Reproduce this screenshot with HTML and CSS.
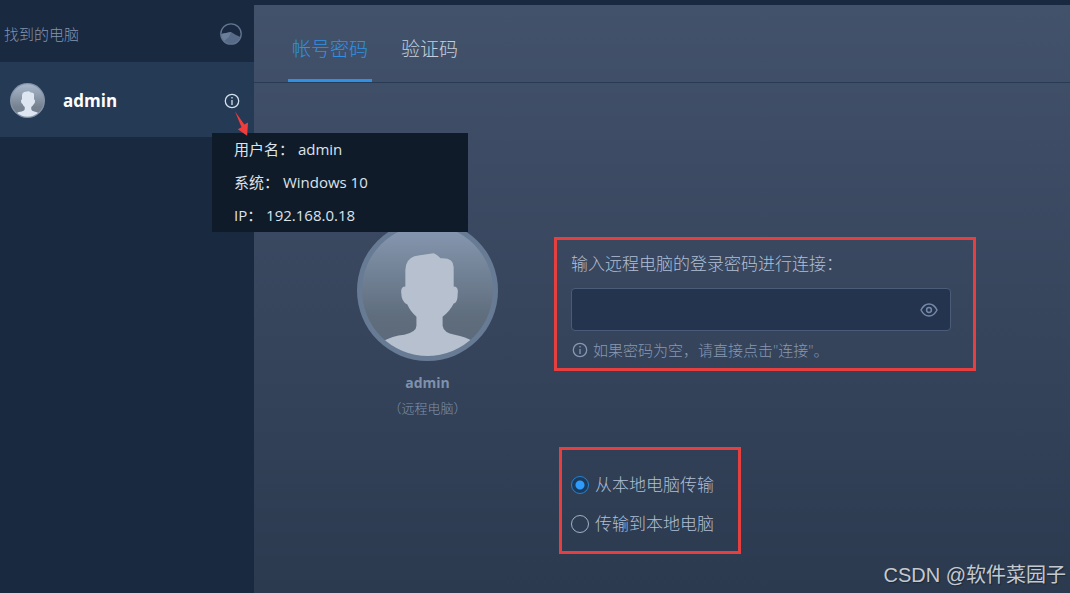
FILE: index.html
```html
<!DOCTYPE html>
<html lang="zh-CN">
<head>
    <meta charset="UTF-8">
    <meta name="viewport" content="width=device-width, initial-scale=1.0">
    <title>连接远程电脑</title>
    <link rel="stylesheet" href="styles.css">
</head>
<body>
<svg class="defs" width="0" height="0" aria-hidden="true">
    <defs>
        <linearGradient id="avatarFill" x1="0" y1="0" x2="0" y2="1">
            <stop offset="0" stop-color="#8799b2"/>
            <stop offset="0.7" stop-color="#5f6d7d"/>
            <stop offset="1" stop-color="#5a6879"/>
        </linearGradient>
        <clipPath id="avatarClip"><circle cx="70" cy="70" r="65"/></clipPath>
        <symbol id="avatar" viewBox="0 0 140 140">
            <circle cx="70" cy="70" r="70" fill="#687b95"/>
            <circle cx="70" cy="70" r="65" fill="url(#avatarFill)"/>
            <path clip-path="url(#avatarClip)" fill="#b6c0ce" d="M48 66 L48 50 Q48 39 57 36 Q67 34 76 33 Q79 34 83 38 Q96 37 96 47 L96 66 Q101 66 100 73 Q100 82 96 83 Q92 91 85 96 L85 105 Q86 112 97 114 Q108 116 116 121 L116 140 L25 140 L25 121 Q35 115 47 114 Q59 111 59 105 L59 96 Q53 91 50 84 Q44 81 44 73 Q43 66 48 66 Z"/>
        </symbol>
        <symbol id="info" viewBox="0 0 16 16">
            <circle cx="8" cy="8" r="6.7" fill="none" stroke="currentColor" stroke-width="1.3"/>
            <path d="M8 7v5M8 4v1.6" fill="none" stroke="currentColor" stroke-width="1.3"/>
        </symbol>
    </defs>
</svg>

<div class="app">
    <aside class="sidebar">
        <div class="sidebar-head">
            <span>找到的电脑</span>
            <svg class="scan-icon" viewBox="0 0 24 24">
                <path d="M2 12 L12 10 L17 13 L21.5 15 A10 10 0 0 1 2 12 Z" fill="#576b88"/>
                <path d="M2 12 L12 10 L10 15 L5 19 A10 10 0 0 1 2 12 Z" fill="#6b7f9b"/>
                <circle cx="12" cy="12" r="10.2" fill="none" stroke="#637691" stroke-width="1.3"/>
            </svg>
        </div>
        <div class="computer">
            <svg class="computer-avatar"><use href="#avatar"/></svg>
            <span class="computer-name">admin</span>
            <button type="button" class="info-button" aria-label="详细信息">
                <svg class="icon"><use href="#info"/></svg>
            </button>
            <svg class="arrow" viewBox="0 0 16 26">
                <path d="M1 0 L11 14 L15 12 L14 26 L4 19 L8 17 Z" fill="#f03c3c"/>
            </svg>
            <div class="tooltip">
                <div>用户名： admin</div>
                <div>系统： Windows 10</div>
                <div>IP： 192.168.0.18</div>
            </div>
        </div>
    </aside>

    <main class="main">
        <nav class="tabs">
            <button type="button" class="tab active">帐号密码</button>
            <button type="button" class="tab">验证码</button>
        </nav>
        <div class="content">
            <div class="remote">
                <svg class="remote-avatar"><use href="#avatar"/></svg>
                <div class="remote-name">admin</div>
                <div class="remote-note">（远程电脑）</div>
            </div>
            <form class="connect-form">
                <div class="marked password-box">
                    <label for="password">输入远程电脑的登录密码进行连接：</label>
                    <div class="password-field">
                        <input type="password" id="password">
                        <button type="button" class="eye-button" aria-label="显示密码">
                            <svg viewBox="0 0 18 14">
                                <path d="M1 7 Q4 1 9 1 Q14 1 17 7 Q14 13 9 13 Q4 13 1 7 Z"/>
                                <circle cx="9" cy="7" r="2.4"/>
                            </svg>
                        </button>
                    </div>
                    <div class="hint">
                        <svg class="icon"><use href="#info"/></svg>
                        <span>如果密码为空，请直接点击"连接"。</span>
                    </div>
                </div>
                <div class="marked direction-box">
                    <label><input type="radio" name="direction" checked>从本地电脑传输</label>
                    <label><input type="radio" name="direction">传输到本地电脑</label>
                </div>
            </form>
        </div>
    </main>
</div>
<div class="watermark">CSDN @软件菜园子</div>
</body>
</html>
```
FILE: styles.css
```css
* {
    box-sizing: border-box;
}
body {
    margin: 0;
    background: #19293f;
    font-family: "Open Sans", "Noto Sans CJK SC", sans-serif;
    font-size: 15px;
    color: #b0bfd6;
}
button {
    padding: 0;
    border: none;
    background: none;
    font-family: inherit;
    cursor: pointer;
}
svg {
    display: block;
}
.defs {
    position: absolute;
}
.icon {
    width: 16px;
    height: 16px;
}
.app {
    display: flex;
    min-height: 100vh;
    padding-top: 5px;
}

/* sidebar */
.sidebar {
    width: 254px;
    flex-shrink: 0;
    background: #19293f;
}
.sidebar-head {
    display: flex;
    align-items: center;
    justify-content: space-between;
    height: 57px;
    padding: 0 11px 0 4px;
    color: #8294b0;
    font-weight: 300;
}
.scan-icon {
    width: 24px;
    height: 24px;
}
.computer {
    position: relative;
    display: flex;
    align-items: center;
    height: 75px;
    padding: 2px 14px 0 10px;
    background: #253a54;
}
.computer-avatar {
    width: 35px;
    height: 35px;
    filter: brightness(1.2) saturate(0.7);
}
.computer-name {
    flex: 1;
    margin-left: 18px;
    color: #fff;
    font-size: 17px;
    font-weight: 700;
}
.info-button {
    color: #d3e0f0;
}
.arrow {
    position: absolute;
    z-index: 3;
    left: 234px;
    top: 49px;
    width: 15px;
    height: 25px;
}
.tooltip {
    position: absolute;
    z-index: 2;
    left: 212px;
    top: 71px;
    width: 256px;
    padding: 0 22px;
    background: #101b2a;
    color: #dce3ec;
    line-height: 33px;
    white-space: nowrap;
}

/* main area */
.main {
    flex: 1;
    background: linear-gradient(#43526b, #2b3a4f);
}
.tabs {
    display: flex;
    gap: 25px;
    height: 78px;
    padding-left: 34px;
    border-bottom: 1px solid #273b55;
}
.tab {
    padding: 11px 4px 0;
    border-bottom: 3px solid transparent;
    color: #c3cfdf;
    font-size: 19px;
    font-weight: 300;
}
.tab.active {
    border-bottom-color: #3090e4;
    color: #3090e4;
}
.content {
    display: flex;
    gap: 56px;
    padding: 137px 94px 0 103px;
}
.remote {
    width: 141px;
    flex-shrink: 0;
    text-align: center;
    color: #7f91ac;
}
.remote-avatar {
    width: 141px;
    height: 141px;
}
.remote-name {
    margin-top: 12px;
    font-size: 14px;
    font-weight: 700;
    line-height: 20px;
}
.remote-note {
    margin-top: 6px;
    font-size: 13px;
    font-weight: 300;
    line-height: 18px;
}
.connect-form {
    flex: 1;
    margin-top: 17px;
}
.marked {
    border: 3px solid #e5403f;
}
.password-box {
    padding: 12px 22px 6px 14px;
}
.password-box label {
    display: block;
    font-size: 17px;
    font-weight: 300;
    line-height: 24px;
}
.password-field {
    display: flex;
    align-items: center;
    height: 43px;
    margin-top: 12px;
    padding-right: 12px;
    border: 1px solid #4a5c78;
    border-radius: 4px;
    background: #25344e;
}
.password-field input {
    flex: 1;
    min-width: 0;
    height: 100%;
    padding: 0 12px;
    border: none;
    outline: none;
    background: none;
    color: #c3cfdf;
    font-size: 17px;
}
.eye-button svg {
    width: 18px;
    height: 14px;
    fill: none;
    stroke: #7488a8;
    stroke-width: 1.5;
}
.hint {
    display: flex;
    align-items: center;
    gap: 5px;
    margin-top: 7px;
    padding-left: 1px;
    color: #8798b4;
    font-weight: 300;
    line-height: 24px;
}
.direction-box {
    display: flex;
    flex-direction: column;
    gap: 15px;
    width: fit-content;
    margin: 76px 0 0 5px;
    padding: 23px 24px 15px 9px;
}
.direction-box label {
    display: flex;
    align-items: center;
    gap: 6px;
    font-size: 17px;
    font-weight: 300;
    line-height: 24px;
}
.direction-box input {
    appearance: none;
    width: 18px;
    height: 18px;
    margin: 0;
    border: 1px solid #a4b1c4;
    border-radius: 50%;
}
.direction-box input:checked {
    border-color: #2382d2;
    background: radial-gradient(circle, #2e9bff 4px, #1c3a5c 5px);
}
.watermark {
    position: absolute;
    right: 4px;
    bottom: 3px;
    color: #c5c9cf;
    font-family: "Liberation Sans", "Noto Sans CJK SC", sans-serif;
    font-size: 20px;
    line-height: 30px;
    text-shadow: 1px 1px 1px #1d2836;
}
```
